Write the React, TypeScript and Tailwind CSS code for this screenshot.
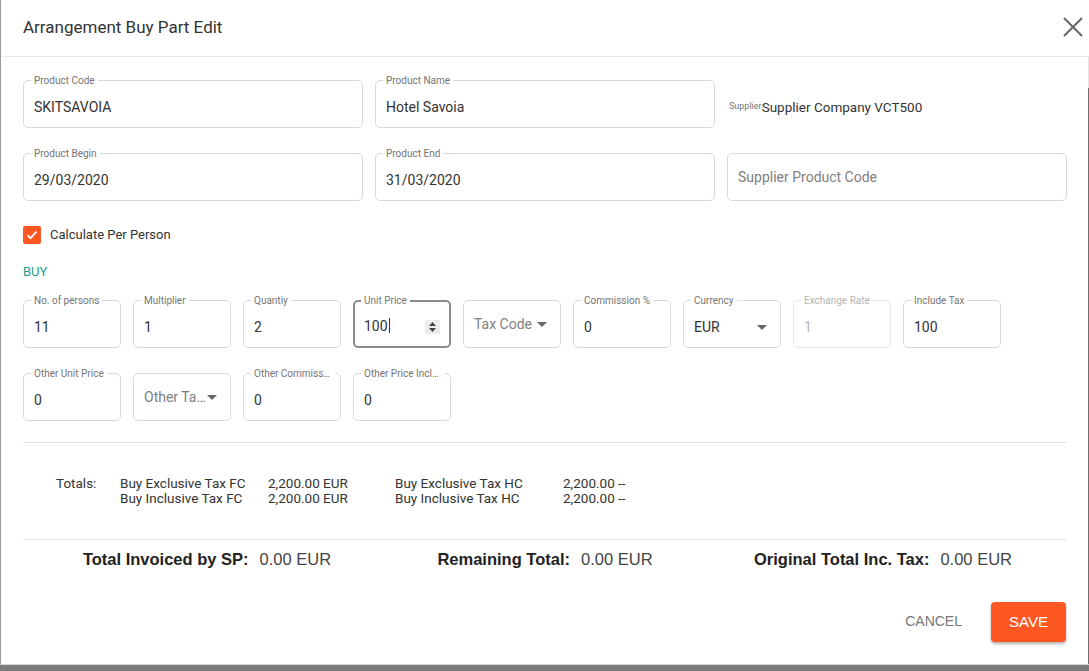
import type { ReactNode } from "react";

// Outlined text field with the label sitting in the top border.
function Field({
  label,
  value,
  placeholder,
  focused,
  disabled,
  spinner,
  select,
}: {
  label?: string;
  value?: string;
  placeholder?: string;
  focused?: boolean;
  disabled?: boolean;
  spinner?: boolean;
  select?: boolean;
}) {
  const border = focused
    ? "border-2 border-[#8c8c8c]"
    : disabled
      ? "border border-[#e6e6e6]"
      : "border border-[#dadada]";
  return (
    <div className={`relative h-12 rounded-[5px] ${border}`}>
      {label && (
        <span
          className={`absolute max-w-[calc(100%-12px)] truncate bg-white px-[3px] text-[10px] leading-[12px] ${
            focused ? "-top-[7px] left-[6px]" : "-top-[6px] left-[7px]"
          } ${disabled ? "text-[#b5b5b5]" : "text-[#757575]"}`}
        >
          {label}
        </span>
      )}
      <div
        className={`flex h-full items-center ${
          focused ? "pl-[9px] pr-[9px]" : "pl-[10px] pr-[13px]"
        } ${placeholder ? "" : focused ? "pt-[5px]" : "pt-[6px]"}`}
      >
        {placeholder ? (
          <span
            className={`truncate text-[14px] text-[#808080] ${select ? "w-[63px]" : "flex-1"}`}
          >
            {placeholder}
          </span>
        ) : (
          <span
            className={`min-w-0 flex-1 truncate text-[14px] ${
              disabled ? "text-[#b5b5b5]" : "text-[#333]"
            }`}
          >
            {value}
            {focused && <span className="ml-px inline-block h-[15px] w-px translate-y-[2px] bg-[#333]" />}
          </span>
        )}
        {spinner && <Spinner />}
        {select && <Caret />}
      </div>
    </div>
  );
}

function Caret() {
  return (
    <svg width="10" height="5" viewBox="0 0 10 5" className="ml-auto flex-none">
      <path d="M0 0h10L5 5z" fill="#666" />
    </svg>
  );
}

function Spinner() {
  return (
    <span className="flex h-[14px] w-[15px] flex-none items-center justify-center bg-[#ececec]">
      <svg width="7" height="10" viewBox="0 0 7 10">
        <path d="M0 4l3.5-4L7 4z M0 6h7L3.5 10z" fill="#444" />
      </svg>
    </span>
  );
}

function Checkbox() {
  return (
    <span className="flex h-[18px] w-[18px] items-center justify-center rounded-[2px] bg-[#ff5722]">
      <svg width="12" height="10" viewBox="0 0 12 10">
        <path d="M1.5 5.2l3 3 6-6.5" fill="none" stroke="#fff" strokeWidth="1.8" />
      </svg>
    </span>
  );
}

function Total({ label, value }: { label: string; value: string }) {
  return (
    <div
      className="flex items-baseline justify-center gap-[11px] text-[16.5px]"
      style={{ fontFamily: "'Liberation Sans', Arial, sans-serif" }}
    >
      <span className="font-bold text-[#222]">{label}</span>
      <span className="text-[#444]">{value}</span>
    </div>
  );
}

function Row({ children }: { children: ReactNode }) {
  return <div className="grid grid-cols-[repeat(9,98px)] gap-x-3">{children}</div>;
}

export default function App() {
  return (
    <div
      className="h-[671px] w-[1089px] overflow-hidden bg-[#7d7d7d]"
      style={{ fontFamily: "Roboto, 'Liberation Sans', Arial, sans-serif" }}
    >
      <div className="flex h-[665px] w-[1089px] flex-col border-b border-l border-[#d6d6d6] border-l-[#9a9a9a] bg-white">
        <header className="flex h-[57px] flex-none items-center justify-between border-b border-[#e8e8e8] pl-[22px] pr-[6px]">
          <h2 className="text-[17px] text-[#333]">Arrangement Buy Part Edit</h2>
          <svg width="20" height="20" viewBox="0 0 20 20" className="mb-[2px]">
            <path d="M1 1l18 18M19 1L1 19" stroke="#666" strokeWidth="2" />
          </svg>
        </header>

        <div className="flex min-h-0 flex-1">
          <div className="flex-1 pl-[22px] pr-[21px] pt-[23px]">
            <div className="grid grid-cols-3 gap-x-3 gap-y-[25px]">
              <Field label="Product Code" value="SKITSAVOIA" />
              <Field label="Product Name" value="Hotel Savoia" />
              <div className="flex items-center pl-[2px] pt-[6px]">
                <span className="text-[9px] text-[#777]">Supplier</span>
                <span className="text-[13.5px] text-[#333]">Supplier Company VCT500</span>
              </div>
              <Field label="Product Begin" value="29/03/2020" />
              <Field label="Product End" value="31/03/2020" />
              <Field placeholder="Supplier Product Code" />
            </div>

            <label className="mt-[25px] flex items-center gap-[9px]">
              <Checkbox />
              <span className="text-[13px] leading-[18px] text-[#333]">Calculate Per Person</span>
            </label>

            <div className="mt-[20px] text-[13px] leading-[16px] text-[#1f9e8c]">BUY</div>

            <div className="mt-[20px] flex flex-col gap-[25px]">
              <Row>
                <Field label="No. of persons" value="11" />
                <Field label="Multiplier" value="1" />
                <Field label="Quantiy" value="2" />
                <Field label="Unit Price" value="100" focused spinner />
                <Field placeholder="Tax Code" select />
                <Field label="Commission %" value="0" />
                <Field label="Currency" value="EUR" select />
                <Field label="Exchange Rate" value="1" disabled />
                <Field label="Include Tax" value="100" />
              </Row>
              <Row>
                <Field label="Other Unit Price" value="0" />
                <Field placeholder="Other Tax Code" select />
                <Field label="Other Commission %" value="0" />
                <Field label="Other Price Include Tax" value="0" />
              </Row>
            </div>

            <div className="mt-[21px] border-t border-[#e2e2e2]" />

            <div className="flex pl-[33px] pt-[33px] text-[13.5px] leading-[15px] text-[#333]">
              <div className="w-[64px]">Totals:</div>
              <div className="w-[148px]">
                <div>Buy Exclusive Tax FC</div>
                <div>Buy Inclusive Tax FC</div>
              </div>
              <div className="w-[127px]">
                <div>2,200.00 EUR</div>
                <div>2,200.00 EUR</div>
              </div>
              <div className="w-[168px]">
                <div>Buy Exclusive Tax HC</div>
                <div>Buy Inclusive Tax HC</div>
              </div>
              <div>
                <div>2,200.00 --</div>
                <div>2,200.00 --</div>
              </div>
            </div>

            <div className="mt-[33px] border-t border-[#e2e2e2]" />

            <div className="grid grid-cols-3 px-[15px] pt-[7px]">
              <Total label="Total Invoiced by SP:" value="0.00 EUR" />
              <Total label="Remaining Total:" value="0.00 EUR" />
              <Total label="Original Total Inc. Tax:" value="0.00 EUR" />
            </div>

            <div
              className="mt-[30px] flex items-center justify-end"
              style={{ fontFamily: "'Liberation Sans', Arial, sans-serif" }}
            >
              <button className="mr-[21px] px-2 text-[14px] uppercase text-[#777]">Cancel</button>
              <button className="mr-px h-10 w-[75px] rounded-[4px] bg-[#ff5722] text-[15px] uppercase text-white shadow-[0_2px_3px_rgba(0,0,0,0.3)]">
                Save
              </button>
            </div>
          </div>

          {/* thin scrollbar on the right of the body */}
          <div className="flex w-px flex-none flex-col bg-[#e4e4e4]">
            <div className="mt-[31px] flex-1 bg-[#6f6f6f]" />
          </div>
        </div>
      </div>
    </div>
  );
}
